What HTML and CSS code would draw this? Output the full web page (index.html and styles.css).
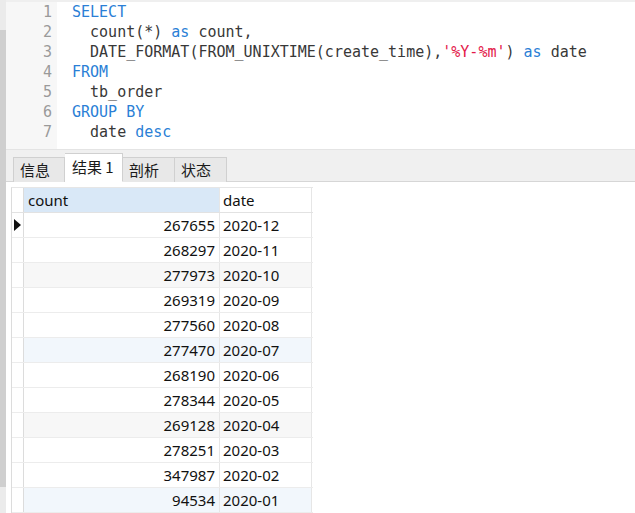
FILE: index.html
```html
<!DOCTYPE html>
<html>
<head>
<meta charset="utf-8">
<link rel="stylesheet" href="styles.css">
</head>
<body>
<div class="app">
  <div class="side">
    <div class="side-top"></div>
    <div class="thumb"></div>
  </div>
  <div class="main">
    <div class="editor">
      <div class="gutter">
        <div>1</div><div>2</div><div>3</div><div>4</div><div>5</div><div>6</div><div>7</div>
      </div>
      <div class="code"><div class="ln"><span class="kw">SELECT</span></div><div class="ln">  count(*) <span class="kw">as</span> count,</div><div class="ln">  DATE_FORMAT(FROM_UNIXTIME(create_time),<span class="str">'%Y-%m'</span>) <span class="kw">as</span> date</div><div class="ln"><span class="kw">FROM</span></div><div class="ln">  tb_order</div><div class="ln"><span class="kw">GROUP BY</span></div><div class="ln">  date <span class="kw">desc</span></div></div>
    </div>
    <div class="tabbar">
      <div class="tab t1">信息</div>
      <div class="tab active">结果 1</div>
      <div class="tab t3">剖析</div>
      <div class="tab t4">状态</div>
    </div>
    <div class="panel">
      <div class="grid">
        <div class="row head">
          <div class="ind"></div>
          <div class="c1">count</div>
          <div class="c2">date</div>
        </div>
        <div class="row"><div class="ind"><span class="arrow"></span></div><div class="c1 num">267655</div><div class="c2">2020-12</div></div>
        <div class="row"><div class="ind"></div><div class="c1 num">268297</div><div class="c2">2020-11</div></div>
        <div class="row grey"><div class="ind"></div><div class="c1 num">277973</div><div class="c2">2020-10</div></div>
        <div class="row"><div class="ind"></div><div class="c1 num">269319</div><div class="c2">2020-09</div></div>
        <div class="row"><div class="ind"></div><div class="c1 num">277560</div><div class="c2">2020-08</div></div>
        <div class="row blue"><div class="ind"></div><div class="c1 num">277470</div><div class="c2">2020-07</div></div>
        <div class="row"><div class="ind"></div><div class="c1 num">268190</div><div class="c2">2020-06</div></div>
        <div class="row"><div class="ind"></div><div class="c1 num">278344</div><div class="c2">2020-05</div></div>
        <div class="row grey"><div class="ind"></div><div class="c1 num">269128</div><div class="c2">2020-04</div></div>
        <div class="row"><div class="ind"></div><div class="c1 num">278251</div><div class="c2">2020-03</div></div>
        <div class="row"><div class="ind"></div><div class="c1 num">347987</div><div class="c2">2020-02</div></div>
        <div class="row blue"><div class="ind"></div><div class="c1 num">94534</div><div class="c2">2020-01</div></div>
      </div>
    </div>
  </div>
</div>
</body>
</html>
```

FILE: styles.css
```css
html, body {
  margin: 0;
  padding: 0;
  background: #ffffff;
  overflow: hidden;
}
.app {
  display: flex;
  width: 635px;
  height: 513px;
}
.side {
  width: 6px;
  background: #ebebeb;
  display: flex;
  flex-direction: column;
}
.side-top {
  height: 30px;
}
.thumb {
  height: 457px;
  background: #cfcfcf;
}
.main {
  flex: 1;
  display: flex;
  flex-direction: column;
  min-width: 0;
}
.editor {
  display: flex;
  height: 149px;
  border-top: 2px solid #efefef;
  box-sizing: border-box;
}
.gutter {
  width: 51px;
  background: #f7f7f7;
  padding-right: 5px;
  box-sizing: border-box;
  text-align: right;
  font-family: "DejaVu Sans Mono", monospace;
  font-size: 15px;
  line-height: 20px;
  color: #9a9a9a;
}
.code {
  flex: 1;
  padding-left: 15px;
  font-family: "DejaVu Sans Mono", monospace;
  font-size: 15px;
  line-height: 20px;
  color: #383838;
  white-space: pre;
}
.kw { color: #2b7fd6; }
.str { color: #e3194a; }
.tabbar {
  height: 33px;
  background: #f0f0f0;
  border-top: 1px solid #e4e4e4;
  box-sizing: border-box;
  display: flex;
  align-items: flex-end;
  padding-left: 7px;
  border-bottom: 1px solid #d6d6d6;
}
.tab {
  height: 25px;
  box-sizing: border-box;
  font-family: "Noto Sans CJK SC", "Noto Sans", sans-serif;
  font-size: 15px;
  line-height: 24px;
  color: #1a1a1a;
  padding-left: 6px;
  background: #e8e8e8;
  border: 1px solid #d0d0d0;
  border-bottom: none;
  margin-bottom: -1px;
}
.t1 { width: 52px; }
.t3 { width: 52px; border-left: none; }
.t4 { width: 52px; border-left: none; }
.tab.active {
  width: 58px;
  height: 29px;
  line-height: 26px;
  background: #ffffff;
  padding-left: 7px;
  border-left: none;
  border-bottom: 1px solid #ffffff;
  position: relative;
  z-index: 1;
}
.panel {
  flex: 1;
  background: #ffffff;
  margin-left: 5px;
  padding-top: 5px;
}
.grid {
  width: 301px;
  border-top: 1px solid #e6e6e6;
  border-left: 1px solid #dcdcdc;
  font-family: "Noto Sans", "Noto Sans CJK SC", sans-serif;
  font-size: 15px;
  color: #111;
}
.row {
  display: flex;
  height: 25px;
  border-bottom: 1px solid #ececec;
  box-sizing: border-box;
}
.row.grey .c1, .row.grey .c2 { background: #f7f7f7; }
.row.blue .c1, .row.blue .c2 { background: #f2f7fc; }
.ind {
  width: 12px;
  border-right: 1px solid #dcdcdc;
  display: flex;
  align-items: center;
  padding-left: 2px;
  box-sizing: border-box;
}
.arrow {
  width: 0;
  height: 0;
  border-top: 6px solid transparent;
  border-bottom: 6px solid transparent;
  border-left: 7px solid #111;
}
.c1 {
  width: 196px;
  border-right: 1px solid #e6e6e6;
  box-sizing: border-box;
  line-height: 24px;
  padding: 0 4px;
}
.c2 {
  width: 92px;
  border-right: 1px solid #e6e6e6;
  box-sizing: border-box;
  line-height: 24px;
  padding: 0 3px;
}
.num { text-align: right; }
.head .c1 { background: #d9e8f7; }
.head .c2 { background: #ffffff; }
.head { border-bottom: 1px solid #e2e2e2; }
```
